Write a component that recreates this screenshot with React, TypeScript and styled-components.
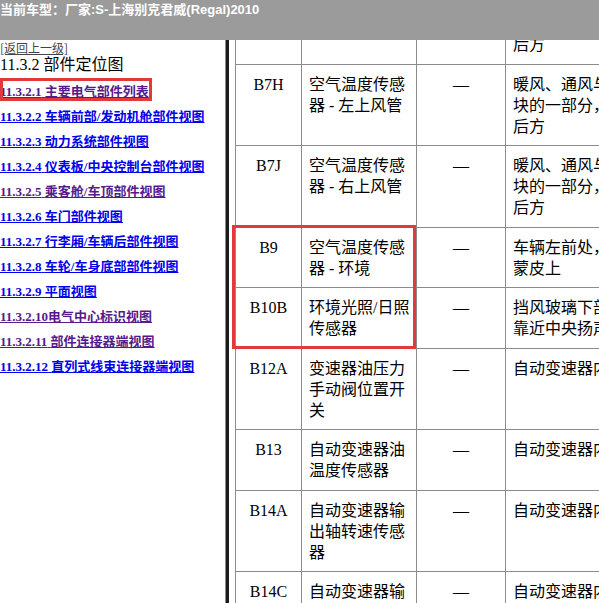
import { useLayoutEffect, useRef } from 'react';
import styled, { createGlobalStyle } from 'styled-components';

const GlobalStyle = createGlobalStyle`
  html, body {
    margin: 0;
    padding: 0;
    background: #fff;
  }

  body {
    font-family: "Liberation Serif", "Noto Sans CJK SC", serif;
    color: #000;
  }
`;

interface Part {
  id: string;
  name: string[];
  place: string[];
  marked?: boolean;
}

const parts: Part[] = [
  {
    id: 'B7G',
    name: ['空气温度传感', '器 - 左下风管'],
    place: ['暖风、通风与空调模', '块的一部分，仪表板', '后方'],
  },
  {
    id: 'B7H',
    name: ['空气温度传感', '器 - 左上风管'],
    place: ['暖风、通风与空调模', '块的一部分，仪表板', '后方'],
  },
  {
    id: 'B7J',
    name: ['空气温度传感', '器 - 右上风管'],
    place: ['暖风、通风与空调模', '块的一部分，仪表板', '后方'],
  },
  {
    id: 'B9',
    name: ['空气温度传感', '器 - 环境'],
    place: ['车辆左前处，前保险杠', '蒙皮上'],
    marked: true,
  },
  {
    id: 'B10B',
    name: ['环境光照/日照', '传感器'],
    place: ['挡风玻璃下部中央，', '靠近中央扬声器'],
  },
  {
    id: 'B12A',
    name: ['变速器油压力', '手动阀位置开', '关'],
    place: ['自动变速器内'],
  },
  {
    id: 'B13',
    name: ['自动变速器油', '温度传感器'],
    place: ['自动变速器内'],
  },
  {
    id: 'B14A',
    name: ['自动变速器输', '出轴转速传感', '器'],
    place: ['自动变速器内'],
  },
  {
    id: 'B14C',
    name: ['自动变速器输', '入轴转速传感', '器'],
    place: ['自动变速器内'],
  },
  {
    id: 'B15',
    name: ['加速踏板位置', '传感器'],
    place: ['加速踏板上'],
  },
];

const links = [
  { no: '11.3.2.1', title: '主要电气部件列表', visited: true, marked: true },
  { no: '11.3.2.2', title: '车辆前部/发动机舱部件视图' },
  { no: '11.3.2.3', title: '动力系统部件视图' },
  { no: '11.3.2.4', title: '仪表板/中央控制台部件视图' },
  { no: '11.3.2.5', title: '乘客舱/车顶部件视图', visited: true },
  { no: '11.3.2.6', title: '车门部件视图' },
  { no: '11.3.2.7', title: '行李厢/车辆后部件视图' },
  { no: '11.3.2.8', title: '车轮/车身底部部件视图' },
  { no: '11.3.2.9', title: '平面视图' },
  { no: '11.3.2.10', title: '电气中心标识视图', visited: true, tight: true },
  { no: '11.3.2.11', title: '部件连接器端视图', visited: true },
  { no: '11.3.2.12', title: '直列式线束连接器端视图' },
];

export default function App() {
  const paneRef = useRef<HTMLDivElement>(null);
  const anchorRef = useRef<HTMLTableRowElement>(null);

  // the document frame is scrolled so that the B7H row sits just under the bar
  useLayoutEffect(() => {
    const pane = paneRef.current;
    const row = anchorRef.current;
    if (!pane || !row) return;
    pane.scrollTop =
      row.getBoundingClientRect().top - pane.getBoundingClientRect().top - 24;
  }, []);

  return (
    <>
      <GlobalStyle />
      <Page>
        <TopBar>当前车型：厂家:S-上海别克君威(Regal)2010</TopBar>
        <Frames>
          <Nav>
            <BackLink href="#">[返回上一级]</BackLink>
            <Heading>11.3.2 部件定位图</Heading>
            <LinkList>
              {links.map((l) => (
                <LinkItem key={l.no}>
                  <NavLink href="#" $visited={!!l.visited}>
                    {l.no}
                    {l.tight ? '' : ' '}
                    {l.title}
                  </NavLink>
                  {l.marked && <NavMark />}
                </LinkItem>
              ))}
            </LinkList>
          </Nav>
          <Splitter />
          <Content ref={paneRef}>
            <Table>
              <colgroup>
                <Col $w={66} />
                <Col $w={115} />
                <Col $w={89} />
                <Col $w={220} />
              </colgroup>
              <tbody>
                {parts.map((p) => (
                  <tr key={p.id} ref={p.id === 'B7H' ? anchorRef : undefined}>
                    <Cell $center>
                      {p.id}
                      {p.marked && <TableMark />}
                    </Cell>
                    <Cell>
                      {p.name.map((line) => (
                        <Line key={line}>{line}</Line>
                      ))}
                    </Cell>
                    <Cell $center>—</Cell>
                    <Cell>
                      {p.place.map((line) => (
                        <Line key={line}>{line}</Line>
                      ))}
                    </Cell>
                  </tr>
                ))}
              </tbody>
            </Table>
          </Content>
        </Frames>
      </Page>
    </>
  );
}

const Page = styled.div`
  display: flex;
  flex-direction: column;
  width: 599px;
  height: 603px;
  overflow: hidden;
`;

const TopBar = styled.header`
  flex: 0 0 40px;
  background: #9b9b9b;
  color: #fff;
  font: bold 13px/19px "Liberation Sans", "Noto Sans CJK SC", sans-serif;
  white-space: nowrap;
`;

const Frames = styled.div`
  display: flex;
  flex: 1;
  min-height: 0;
`;

const Nav = styled.nav`
  flex: 0 0 225px;
  overflow: hidden;
  background: #fff;
`;

const BackLink = styled.a`
  display: block;
  height: 15px;
  font: 12px/15px "Noto Sans CJK SC", sans-serif;
  color: #444;
  text-decoration: underline;
`;

const Heading = styled.h3`
  margin: 0;
  font-size: 16px;
  font-weight: normal;
  line-height: 20px;
  white-space: nowrap;
`;

const LinkList = styled.ul`
  margin: 3px 0 0;
  padding: 0;
  list-style: none;
`;

const LinkItem = styled.li`
  position: relative;
  height: 25px;
  line-height: 25px;
  white-space: nowrap;
`;

const NavLink = styled.a<{ $visited: boolean }>`
  font-size: 13px;
  font-weight: bold;
  color: ${({ $visited }) => ($visited ? '#551a8b' : '#0000ee')};
  text-decoration: underline;
`;

const NavMark = styled.span`
  position: absolute;
  left: 0;
  top: 0;
  width: 152px;
  height: 23px;
  border: 3px solid #e2393c;
  box-sizing: border-box;
  pointer-events: none;
`;

const Splitter = styled.div`
  flex: 0 0 4px;
  box-sizing: border-box;
  border-left: 1px solid #8a8a8a;
  background: #1b1b1b;
`;

const Content = styled.div`
  flex: 1;
  min-width: 0;
  overflow: hidden;
  padding-left: 6px;
  background: #fff;
`;

const Table = styled.table`
  border-collapse: collapse;
  table-layout: fixed;
  width: 490px;
  font-size: 16px;
  line-height: 21px;
`;

const Col = styled.col<{ $w: number }>`
  width: ${({ $w }) => $w}px;
`;

const Cell = styled.td<{ $center?: boolean }>`
  position: relative;
  border: 1px solid #8c8c8c;
  padding: 9px 7px 8.5px;
  vertical-align: top;
  white-space: nowrap;
  text-align: ${({ $center }) => ($center ? 'center' : 'left')};
`;

const Line = styled.div``;

const TableMark = styled.span`
  position: absolute;
  left: -4px;
  top: -3px;
  width: 184px;
  height: 124px;
  border: 3px solid #e2393c;
  box-sizing: border-box;
  pointer-events: none;
`;
